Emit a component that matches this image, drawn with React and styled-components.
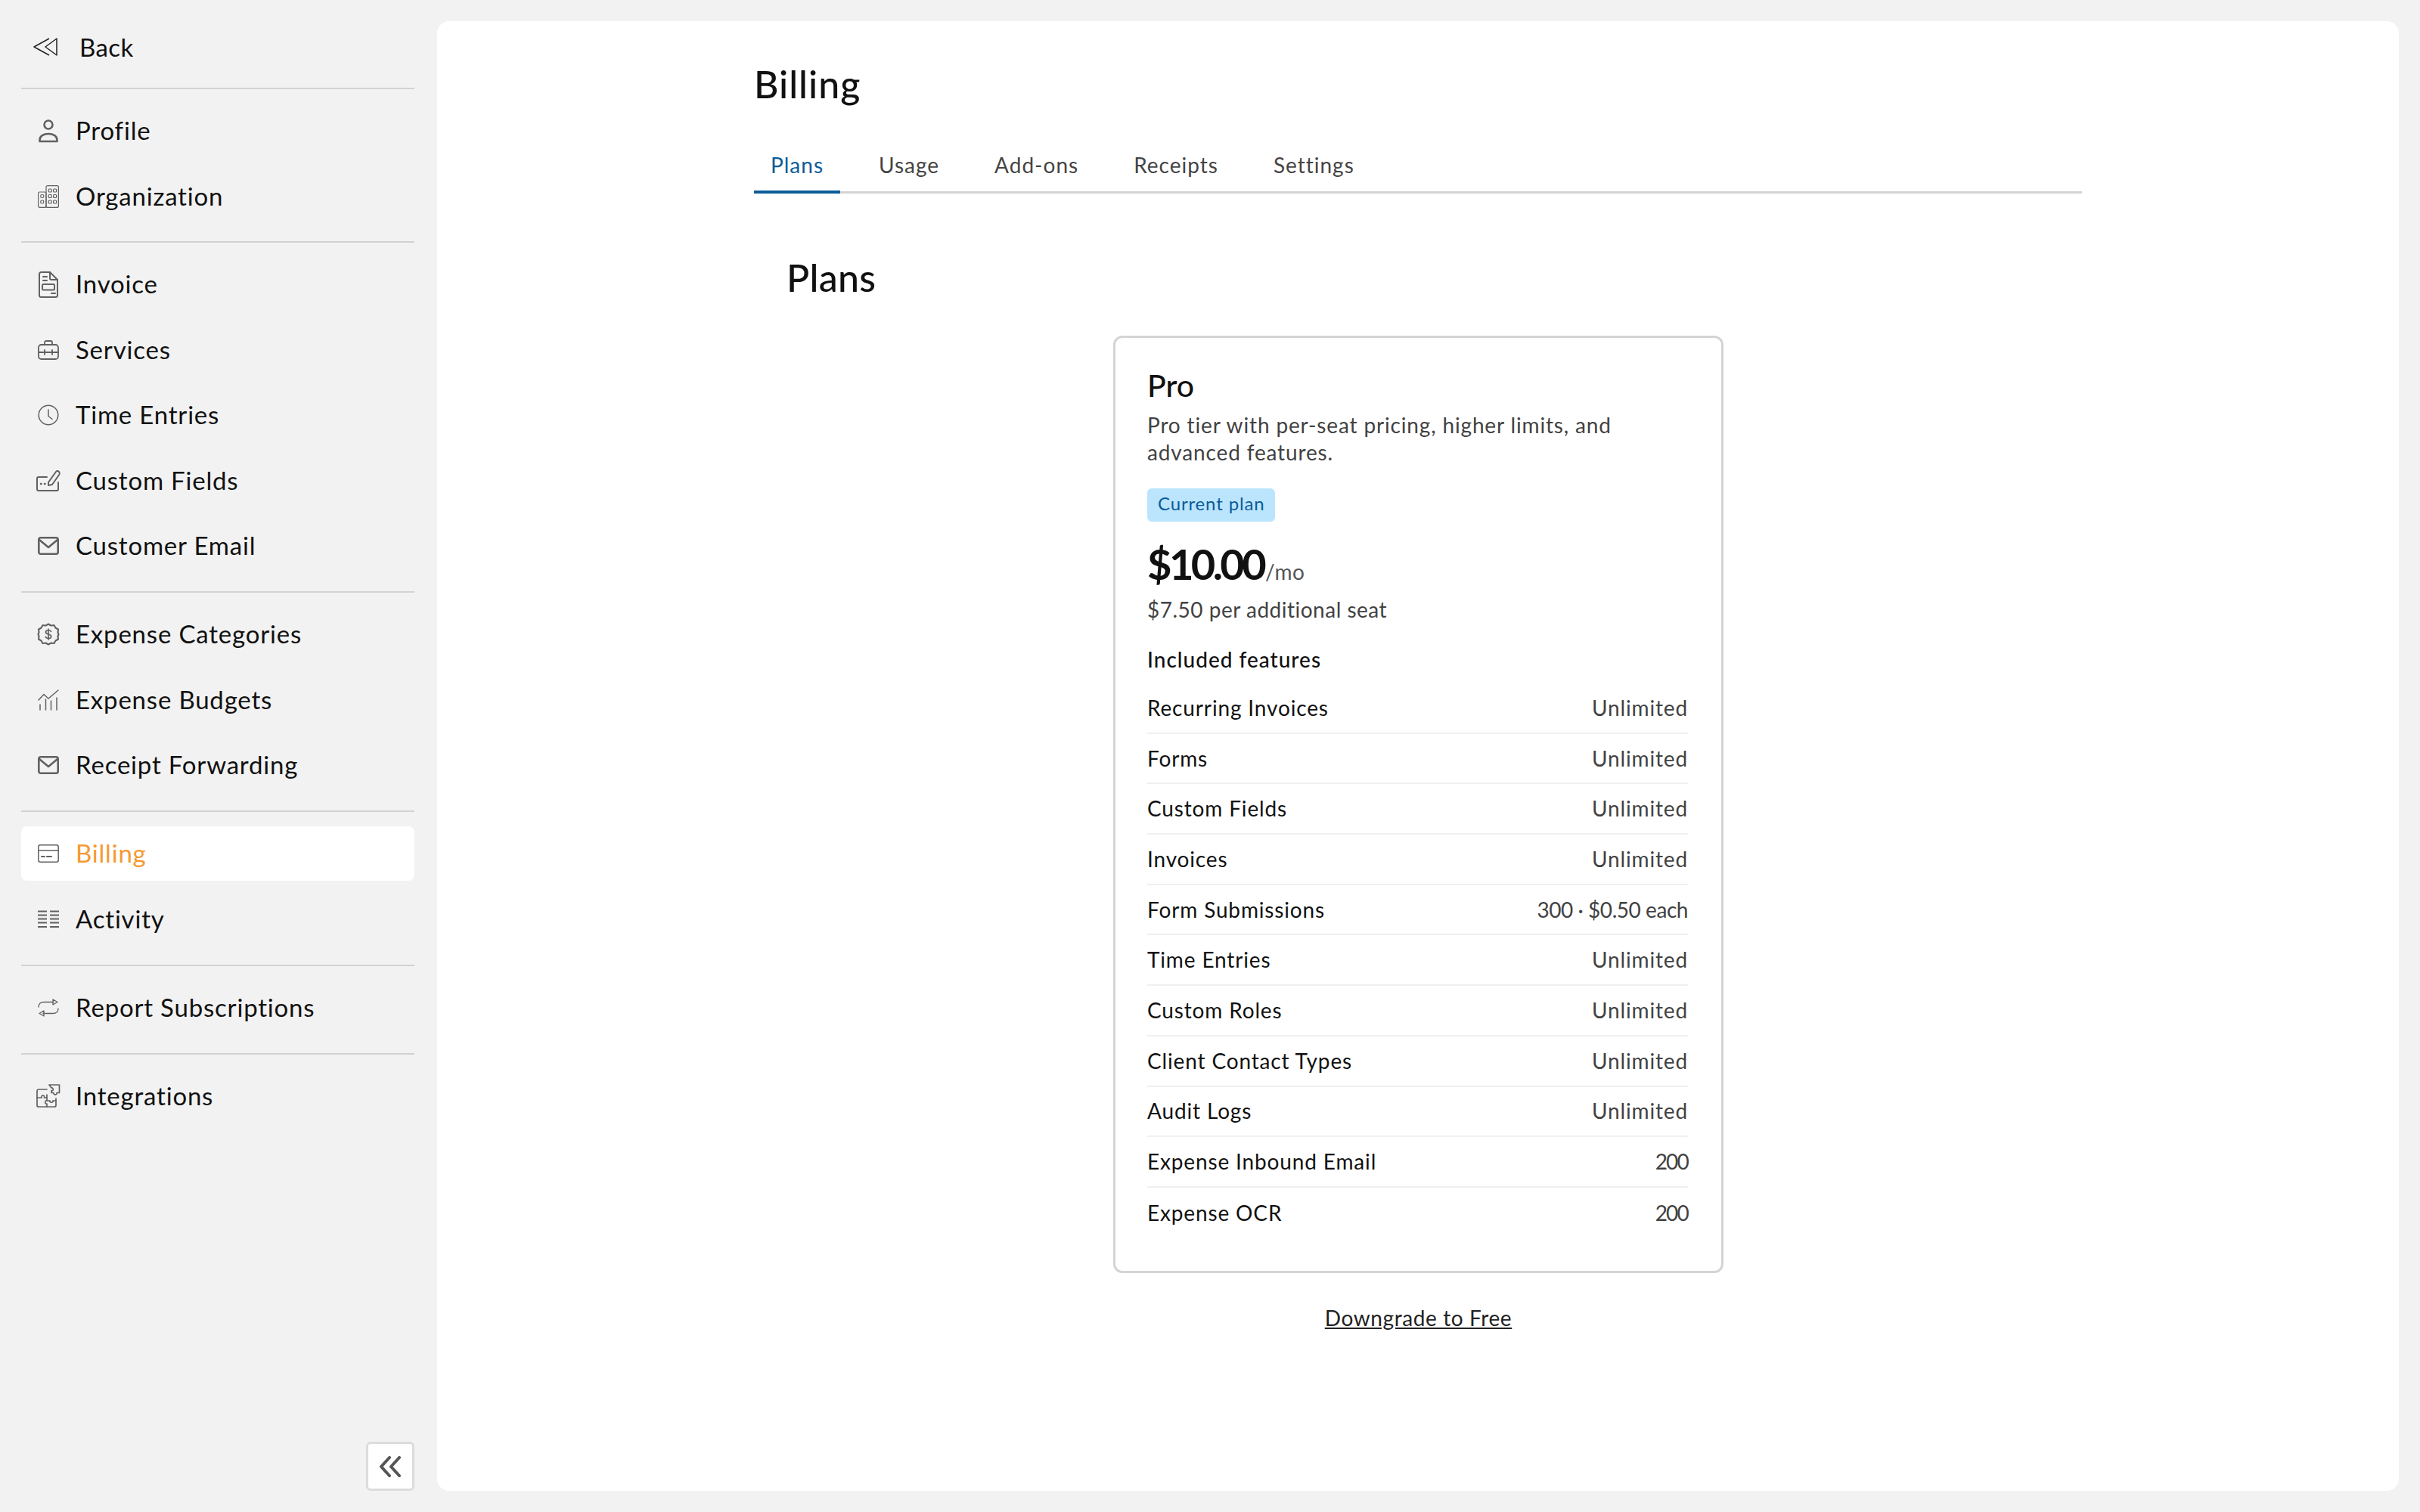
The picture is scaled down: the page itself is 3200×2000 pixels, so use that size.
import React from 'react';
import styled, { createGlobalStyle } from 'styled-components';

const GlobalStyle = createGlobalStyle`
  html, body { margin: 0; padding: 0; background: #f2f2f2; }
  * { box-sizing: border-box; }
  body { font-family: "Lato", "Noto Sans", sans-serif; color: #111; }
`;

const Shell = styled.div`
  display: flex;
  width: 3200px;
  height: 2000px;
  background: #f2f2f2;
`;

const Sidebar = styled.aside`
  width: 578px;
  flex: none;
  padding: 27px 30px 28px 28px;
  display: flex;
  flex-direction: column;
`;

const BackRow = styled.div`
  height: 72px;
  display: flex;
  align-items: center;
  gap: 29px;
  padding: 0 0 2px 16px;
  font-size: 33px;
  letter-spacing: 0.4px;
  color: #111;
  margin-bottom: 17px;
`;

const Group = styled.div`
  display: flex;
  flex-direction: column;
  gap: 14.5px;
  padding: 19px 0 24px;
  border-top: 2px solid #d2d2d2;
  &:nth-of-type(2) { padding-bottom: 23.5px; }
`;

const NavItem = styled.div`
  height: 72px;
  display: flex;
  align-items: center;
  gap: 22px;
  padding-left: 22px;
  border-radius: 8px;
  font-size: 33px;
  letter-spacing: 0.8px;
  background: ${(p) => (p.$active ? '#fff' : 'transparent')};
  color: ${(p) => (p.$active ? '#f59a32' : '#111')};
`;

const NavLabel = styled.span`
  position: relative;
  top: -1px;
`;

const IconSlot = styled.span`
  width: 28px;
  height: 36px;
  flex: none;
  display: flex;
  align-items: center;
  justify-content: center;
  svg { display: block; overflow: visible; fill: none; stroke: #616161; stroke-linecap: round; stroke-linejoin: round; }
`;

const CollapseButton = styled.button`
  margin: auto 0 0 auto;
  width: 64px;
  height: 65px;
  padding: 0;
  background: #fff;
  border: 3px solid #dcdcdc;
  border-radius: 6px;
  display: flex;
  align-items: center;
  justify-content: center;
  svg { display: block; fill: none; stroke: #555; stroke-width: 4; stroke-linecap: round; stroke-linejoin: round; }
`;

const Panel = styled.main`
  flex: 1;
  margin: 28px 28px 28px 0;
  background: #fff;
  border-radius: 16px;
  padding: 52px 419px 0;
`;

const Title = styled.h1`
  margin: 0;
  height: 64px;
  line-height: 62px;
  font-size: 50px;
  font-weight: 500;
  letter-spacing: 1px;
  color: #111;
`;

const TabBar = styled.div`
  margin-top: 40px;
  height: 72px;
  display: flex;
  gap: 29px;
  border-bottom: 3px solid #d4d4d4;
`;

const Tab = styled.div`
  height: 72px;
  padding: 0 22px ${(p) => (p.$active ? '1px' : '5px')};
  display: flex;
  align-items: center;
  font-size: 28px;
  letter-spacing: 1px;
  color: ${(p) => (p.$active ? '#0b5c99' : '#444')};
  border-bottom: ${(p) => (p.$active ? '4px solid #0b5c99' : 'none')};
`;

const Section = styled.section`
  padding: 0 44px 0 45px;
`;

const SectionTitle = styled.h2`
  margin: 80px 0 0 -2px;
  height: 64px;
  line-height: 62px;
  font-size: 50px;
  font-weight: 500;
  letter-spacing: 0.3px;
  color: #111;
`;

const Card = styled.div`
  width: 807px;
  margin: 44px auto 0;
  padding: 37px 44px 43px 42px;
  border: 3px solid #d4d4d4;
  border-radius: 12px;
`;

const PlanName = styled.div`
  height: 52px;
  line-height: 52px;
  font-size: 41px;
  font-weight: 500;
`;

const PlanDesc = styled.p`
  margin: 8px 0 0;
  font-size: 28px;
  line-height: 36px;
  letter-spacing: 0.85px;
  color: #424242;
`;

const Badge = styled.span`
  display: inline-flex;
  align-items: center;
  height: 44px;
  margin-top: 30px;
  padding: 0 14px 5px;
  border-radius: 6px;
  background: #bbe5fd;
  color: #0b5c99;
  font-size: 24px;
  letter-spacing: 0.85px;
`;

const PriceRow = styled.div`
  margin-top: 20px;
  height: 72px;
  line-height: 72px;
  display: flex;
  align-items: baseline;
`;

const Price = styled.span`
  font-size: 56px;
  font-weight: 700;
  letter-spacing: -3.6px;
  margin-right: 2px;
`;

const Per = styled.span`
  font-size: 28px;
  letter-spacing: 0.5px;
  color: #555;
`;

const SeatNote = styled.div`
  margin-top: 6px;
  height: 36px;
  line-height: 36px;
  font-size: 28px;
  letter-spacing: 0.5px;
  color: #424242;
`;

const FeaturesHead = styled.div`
  margin-top: 30px;
  height: 36px;
  line-height: 36px;
  font-size: 28px;
  font-weight: 500;
  letter-spacing: 1px;
  color: #111;
`;

const FeatureList = styled.div`
  margin-top: 14px;
`;

const FeatureRow = styled.div`
  height: 66.7px;
  display: flex;
  align-items: center;
  justify-content: space-between;
  padding-bottom: 1px;
  font-size: 28px;
  letter-spacing: 0.85px;
  color: #111;
  border-bottom: 2px solid #f0f0f0;
  &:last-child { border-bottom: 0; }
`;

const FeatureValue = styled.span`
  color: #424242;
  letter-spacing: ${(p) => p.$spacing ?? '0.85px'};
`;

const Downgrade = styled.div`
  margin-top: 41px;
  height: 36px;
  line-height: 36px;
  text-align: center;
  font-size: 28px;
  letter-spacing: 0.6px;
  color: #222;
  text-decoration: underline;
`;

const BackIcon = () => (
  <svg width="32" height="24" viewBox="0 0 32 24" style={{ stroke: '#222', fill: 'none', strokeWidth: 1.5, strokeLinejoin: 'round', display: 'block', flex: 'none' }}>
    <path d="M21 1 1 12l20 11" />
    <path d="M31 1v22L16 12z" />
  </svg>
);

const icons = {
  profile: (
    <svg width="26" height="30" viewBox="0 0 26 30" strokeWidth="2.6">
      <circle cx="13" cy="7" r="5.5" />
      <path d="M1.5 29v-2c0-5 5-8 11.500-8s11.500 3 11.500 8v2z" />
    </svg>
  ),
  organization: (
    <svg width="28" height="30" viewBox="0 0 28 30" strokeWidth="1.2">
      <rect x="0.600" y="9" width="10.400" height="20.400" rx="2" />
      <rect x="11" y="0.600" width="16.400" height="28.800" rx="2" />
      <rect x="3.800" y="12.500" width="4" height="4" rx="1.500" />
      <rect x="3.800" y="20" width="4" height="4" rx="1.500" />
      <rect x="14.200" y="5" width="4" height="4" rx="1" />
      <rect x="20.600" y="5" width="4" height="4" rx="1" />
      <rect x="14.200" y="12.500" width="4" height="4" rx="1" />
      <rect x="20.600" y="12.500" width="4" height="4" rx="1" />
      <rect x="14.200" y="20" width="4" height="4" rx="1" />
      <rect x="20.600" y="20" width="4" height="4" rx="1" />
    </svg>
  ),
  invoice: (
    <svg width="26" height="35" viewBox="0 0 26 35" strokeWidth="2">
      <path d="M3.500 1H15l10 10v20.500a2.500 2.500 0 0 1-2.500 2.500h-19A2.500 2.500 0 0 1 1 31.500v-28A2.500 2.500 0 0 1 3.500 1z" />
      <path d="M15 1v8a2 2 0 0 0 2 2h8" />
      <path d="M6 7h5M6 12h5M17 29h5" />
      <rect x="5" y="17" width="16" height="7.500" rx="1.500" />
    </svg>
  ),
  services: (
    <svg width="28" height="26" viewBox="0 0 28 26" strokeWidth="1.800">
      <path d="M9 6V3a2 2 0 0 1 2-2h6a2 2 0 0 1 2 2v3" />
      <rect x="1" y="6" width="26" height="19" rx="3.500" />
      <path d="M1 16h26M9 13v6M19 13v6" />
    </svg>
  ),
  time: (
    <svg width="28" height="30" viewBox="0 0 28 30" strokeWidth="1.500">
      <circle cx="14" cy="15" r="12.800" />
      <path d="M14 8v8.500l5 4" />
    </svg>
  ),
  fields: (
    <svg width="32" height="28" viewBox="0 0 32 28" strokeWidth="2">
      <path d="M14 9H3a2 2 0 0 0-2 2v14a2 2 0 0 0 2 2h24a2 2 0 0 0 2-2v-9" />
      <path d="M16 16 26 2a2.500 2.500 0 0 1 4 0c1 1 1 2.500 .5 3.500L21 19l-5 1z" />
      <path d="M6 18h.5M11 18h.5" strokeWidth="2.600" />
    </svg>
  ),
  mail: (
    <svg width="28" height="24" viewBox="0 0 28 24" strokeWidth="2.600">
      <rect x="1.300" y="1.300" width="25.400" height="21.400" rx="2.500" />
      <path d="m2 4 12 10L26 4" />
    </svg>
  ),
  categories: (
    <svg width="28" height="30" viewBox="0 0 28 30" strokeWidth="2.100">
      <path d="M14 1.500l3.500 2 4-.5 2 3.500 3.500 2-.5 4 1 2.500-1 2.500.5 4-3.500 2-2 3.500-4-.5-3.500 2-3.500-2-4 .5-2-3.500-3.500-2 .5-4-1-2.500 1-2.500-.5-4 3.500-2 2-3.500 4 .5z" />
      <path d="M17.500 11.500c-.5-1.500-2-2-3.500-2-2 0-3.500 1-3.500 2.800 0 3.700 7.200 1.700 7.200 5.400 0 1.800-1.600 2.800-3.700 2.800-1.700 0-3.200-.7-3.700-2.200M14 8v14" strokeWidth="1.700" />
    </svg>
  ),
  budgets: (
    <svg width="28" height="28" viewBox="0 0 28 28" strokeWidth="1.500">
      <path d="M1 14 8 6.500l6 5.500L27 1" />
      <path d="M3 27v-7M10.500 27V13M17.500 27V15M25 27V11" />
    </svg>
  ),
  billing: (
    <svg width="28" height="24" viewBox="0 0 28 24" strokeWidth="1.500">
      <rect x="0.800" y="0.800" width="26.400" height="22.400" rx="2.500" />
      <path d="M1 8h26" />
      <path d="M5 16h4M12 16h6" strokeWidth="2" />
    </svg>
  ),
  activity: (
    <svg width="28" height="24" viewBox="0 0 28 24" strokeWidth="1.800">
      <path d="M0 1.500h12M0 6.500h12M0 11.500h12M0 16.500h12M0 22h12M16 1.500h12M16 6.500h12M16 11.500h12M16 16.500h12M16 22h12" strokeLinecap="butt" />
    </svg>
  ),
  report: (
    <svg width="28" height="28" viewBox="0 0 28 28" strokeWidth="1.300">
      <path d="M1 13c0-4 2.500-6.500 7-6.500h13" />
      <path d="M20 3l6 3.500-6 3.500z" />
      <path d="M27 15c0 4-2.500 6.500-7 6.500H7" />
      <path d="M8 18l-6 3.500 6 3.500z" />
    </svg>
  ),
  integrations: (
    <svg width="32" height="32" viewBox="0 0 32 32" strokeWidth="1.700">
      <path d="M14 7H3a2 2 0 0 0-2 2v19a2 2 0 0 0 2 2h21a2 2 0 0 0 2-2v-9" />
      <path d="M1 18h6c-1.500-4 5-4 3.500 0H14v4c-3-1-3 5 0 4v4" />
      <path d="M14 18v-4M14 22h4c-1 3 5 3 4 0h4" />
      <path d="M17 1h13.500v10.500h-3.500c1 3-4.500 3.500-4 0h-3v-3c3 1 3-4 0-3.500z" />
    </svg>
  ),
};

const navGroups = [
  [['profile', 'Profile'], ['organization', 'Organization']],
  [['invoice', 'Invoice'], ['services', 'Services'], ['time', 'Time Entries'], ['fields', 'Custom Fields'], ['mail', 'Customer Email']],
  [['categories', 'Expense Categories'], ['budgets', 'Expense Budgets'], ['mail', 'Receipt Forwarding']],
  [['billing', 'Billing'], ['activity', 'Activity']],
  [['report', 'Report Subscriptions']],
  [['integrations', 'Integrations']],
];

const tabs = ['Plans', 'Usage', 'Add-ons', 'Receipts', 'Settings'];

const features = [
  ['Recurring Invoices', 'Unlimited'],
  ['Forms', 'Unlimited'],
  ['Custom Fields', 'Unlimited'],
  ['Invoices', 'Unlimited'],
  ['Form Submissions', '300 · $0.50 each', '-0.45px'],
  ['Time Entries', 'Unlimited'],
  ['Custom Roles', 'Unlimited'],
  ['Client Contact Types', 'Unlimited'],
  ['Audit Logs', 'Unlimited'],
  ['Expense Inbound Email', '200', '-1.8px'],
  ['Expense OCR', '200', '-1.8px'],
];

export default function App() {
  return (
    <>
      <GlobalStyle />
      <Shell>
        <Sidebar>
          <BackRow>
            <BackIcon />
            Back
          </BackRow>
          {navGroups.map((group, i) => (
            <Group key={i}>
              {group.map(([icon, label]) => (
                <NavItem key={label} $active={label === 'Billing'}>
                  <IconSlot>{icons[icon]}</IconSlot>
                  <NavLabel>{label}</NavLabel>
                </NavItem>
              ))}
            </Group>
          ))}
          <CollapseButton aria-label="Collapse">
            <svg width="28" height="28" viewBox="0 0 28 28">
              <path d="M13 2 2 14l11 12M26 2 15 14l11 12" />
            </svg>
          </CollapseButton>
        </Sidebar>
        <Panel>
          <Title>Billing</Title>
          <TabBar>
            {tabs.map((tab) => (
              <Tab key={tab} $active={tab === 'Plans'}>{tab}</Tab>
            ))}
          </TabBar>
          <Section>
            <SectionTitle>Plans</SectionTitle>
            <Card>
              <PlanName>Pro</PlanName>
              <PlanDesc>Pro tier with per-seat pricing, higher limits, and<br />advanced features.</PlanDesc>
              <Badge>Current plan</Badge>
              <PriceRow>
                <Price>$10.00</Price>
                <Per>/mo</Per>
              </PriceRow>
              <SeatNote>$7.50 per additional seat</SeatNote>
              <FeaturesHead>Included features</FeaturesHead>
              <FeatureList>
                {features.map(([name, value, spacing]) => (
                  <FeatureRow key={name}>
                    <span>{name}</span>
                    <FeatureValue $spacing={spacing}>{value}</FeatureValue>
                  </FeatureRow>
                ))}
              </FeatureList>
            </Card>
            <Downgrade>Downgrade to Free</Downgrade>
          </Section>
        </Panel>
      </Shell>
    </>
  );
}
